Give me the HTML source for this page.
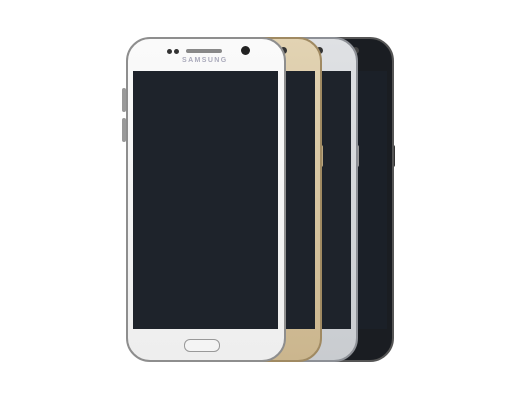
<!DOCTYPE html><html><head><style>
body{margin:0;width:520px;height:400px;background:#fff;position:relative;overflow:hidden;font-family:"Liberation Sans",sans-serif}
.p{position:absolute;top:37px;width:158px;height:325px;border-radius:24px;box-sizing:border-box;border:2px solid #9a9a9a}
.s{position:absolute;left:5px;right:5px;top:32px;bottom:31px;background:#1e232b}
.cam{position:absolute;top:8px;left:114px;width:7px;height:7px;border-radius:50%;background:#333}
</style></head><body>
<div style="position:absolute;left:391px;top:145px;width:4px;height:22px;background:#333;border-radius:2px"></div>
<div class="p" style="left:236px;background:#1a1d22;border-color:#555"><div class="s" style="background:#1b2028"></div><div class="cam" style="background:#444"></div></div>
<div style="position:absolute;left:355px;top:145px;width:4px;height:22px;background:#999;border-radius:2px"></div>
<div class="p" style="left:200px;background:linear-gradient(#dfe1e4,#c9ccd0);border-color:#8d9096"><div class="s"></div><div class="cam"></div></div>
<div style="position:absolute;left:319px;top:145px;width:4px;height:22px;background:#b9a57f;border-radius:2px"></div>
<div class="p" style="left:164px;background:linear-gradient(#e2d3b3,#cbb68e);border-color:#a08a62"><div class="s"></div><div class="cam"></div></div>
<div style="position:absolute;left:122px;top:88px;width:4px;height:24px;background:#999;border-radius:2px"></div>
<div style="position:absolute;left:122px;top:118px;width:4px;height:24px;background:#999;border-radius:2px"></div>
<div class="p" style="left:126px;background:linear-gradient(#fafafa,#eeeeee);border-color:#8e8e8e;width:160px">
<div class="s" style="left:5px;right:6px"></div>
<div style="position:absolute;top:10px;left:39px;width:5px;height:5px;border-radius:50%;background:#333"></div>
<div style="position:absolute;top:10px;left:46px;width:5px;height:5px;border-radius:50%;background:#333"></div>
<div style="position:absolute;top:10px;left:58px;width:36px;height:4px;border-radius:2px;background:#888"></div>
<div style="position:absolute;top:7px;left:113px;width:9px;height:9px;border-radius:50%;background:#222"></div>
<div style="position:absolute;top:18px;left:54px;font-size:7px;letter-spacing:1.4px;color:#aab;font-weight:bold">SAMSUNG</div>
<div style="position:absolute;bottom:8px;left:56px;width:36px;height:13px;border-radius:6px;border:1.5px solid #999;box-sizing:border-box;background:#f4f4f4"></div>
</div>
</body></html>
